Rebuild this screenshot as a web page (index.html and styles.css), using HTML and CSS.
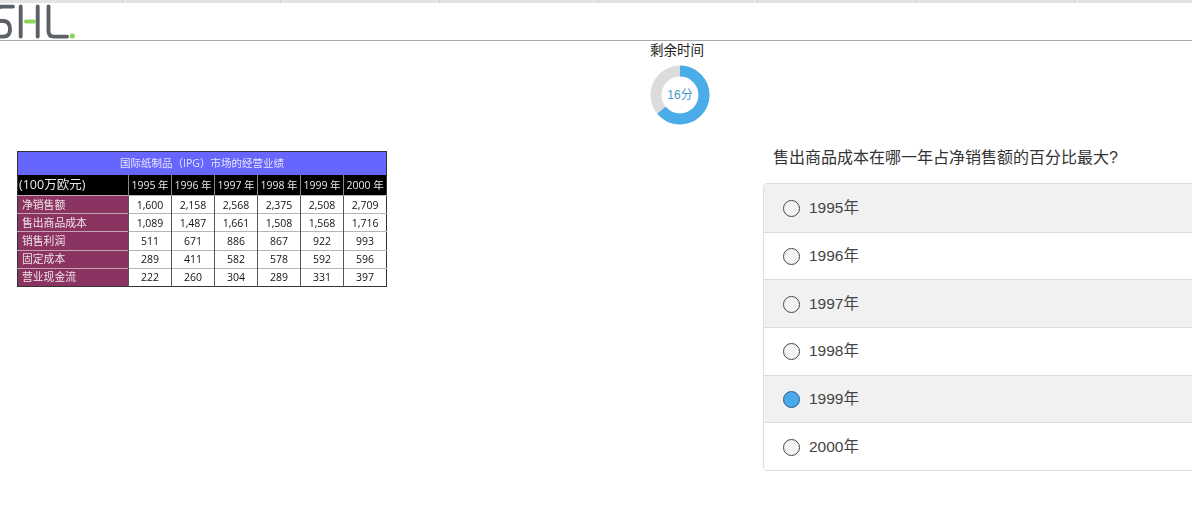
FILE: index.html
```html
<!DOCTYPE html>
<html lang="zh">
<head>
<meta charset="utf-8">
<title>SHL</title>
<link rel="stylesheet" href="styles.css">
</head>
<body>
<div class="page">
  <div class="topbar"><i></i><i></i><i></i><i></i><i></i><i></i><i></i><i></i></div>
  <header class="header">
    <svg class="logo" width="90" height="37" viewBox="0 0 90 37" aria-label="SHL">
      <path class="ink" d="M13 3.600H2.500C-3 3.600-5 7-5 11c0 4 2.500 7 7 7H3.500C8 18 10 21 10 26.500 10 31 8 33.600 3.500 33.600H-6"/>
      <path class="ink" d="M20.700 3.500V33.600M37.700 3.500V33.600M48.500 3.500V28C48.500 31.500 50.500 33.600 54 33.600H67"/>
      <path class="lime" d="M26 18.500H34"/>
      <circle class="dot" cx="72.300" cy="33" r="2.600"/>
    </svg>
  </header>
  <section class="timer">
    <div class="timer-label">剩余时间</div>
    <div class="donut">
      <svg width="60" height="60" viewBox="0 0 60 60">
        <circle class="track" cx="30" cy="30" r="24"/>
        <circle class="value" cx="30" cy="30" r="24" pathLength="100" stroke-dasharray="64 36" transform="rotate(-90 30 30)"/>
      </svg>
      <span class="donut-text">16分</span>
    </div>
  </section>
  <main class="content">
    <div class="left">
      <table class="data">
        <colgroup>
          <col class="c-label"><col class="c-year"><col class="c-year"><col class="c-year"><col class="c-year"><col class="c-year"><col class="c-year">
        </colgroup>
        <thead>
          <tr class="r-title"><th colspan="7">国际纸制品（IPG）市场的经营业绩</th></tr>
          <tr class="r-head"><th class="unit">(100万欧元)</th><th>1995 年</th><th>1996 年</th><th>1997 年</th><th>1998 年</th><th>1999 年</th><th>2000 年</th></tr>
        </thead>
        <tbody>
          <tr><th>净销售额</th><td>1,600</td><td>2,158</td><td>2,568</td><td>2,375</td><td>2,508</td><td>2,709</td></tr>
          <tr><th>售出商品成本</th><td>1,089</td><td>1,487</td><td>1,661</td><td>1,508</td><td>1,568</td><td>1,716</td></tr>
          <tr><th>销售利润</th><td>511</td><td>671</td><td>886</td><td>867</td><td>922</td><td>993</td></tr>
          <tr><th>固定成本</th><td>289</td><td>411</td><td>582</td><td>578</td><td>592</td><td>596</td></tr>
          <tr><th>营业现金流</th><td>222</td><td>260</td><td>304</td><td>289</td><td>331</td><td>397</td></tr>
        </tbody>
      </table>
    </div>
    <div class="right">
      <p class="question">售出商品成本在哪一年占净销售额的百分比最大?</p>
      <ul class="options">
        <li class="option odd"><span class="radio"></span><span class="opt-text">1995年</span></li>
        <li class="option"><span class="radio"></span><span class="opt-text">1996年</span></li>
        <li class="option odd"><span class="radio"></span><span class="opt-text">1997年</span></li>
        <li class="option"><span class="radio"></span><span class="opt-text">1998年</span></li>
        <li class="option odd"><span class="radio on"></span><span class="opt-text">1999年</span></li>
        <li class="option"><span class="radio"></span><span class="opt-text">2000年</span></li>
      </ul>
    </div>
  </main>
</div>
</body>
</html>
```
FILE: styles.css
```css
* { box-sizing: border-box; }
html, body { margin: 0; height: 100%; background: #fff; overflow: hidden; }
body { font-family: "Liberation Sans", "Noto Sans CJK SC", sans-serif; color: #333; }
.page { width: 1360px; }

.topbar { display: flex; height: 3px; background: #e4e4e4; }
.topbar i { width: 158.800px; border-right: 1px solid #d2d2d2; }
.topbar i:first-child { width: 122.500px; }

.header { height: 38px; border-bottom: 1px solid #a8a8a8; }
.logo { display: block; }
.logo path { fill: none; stroke-width: 3.900; stroke-linecap: round; stroke-linejoin: round; }
.ink { stroke: #5b6167; }
.lime { stroke: #8cd65a; }
.dot { fill: #8cd65a; }

.timer { display: flex; flex-direction: column; align-items: center; padding-top: 1px; }
.timer-label { font-size: 13.500px; line-height: 18px; color: #222; margin-left: -6px; }
.donut { position: relative; width: 60px; height: 60px; margin-top: 5px; }
.donut svg { display: block; }
.track, .value { fill: none; stroke-width: 11; }
.track { stroke: #dcdcdc; }
.value { stroke: #4aade9; }
.donut-text { position: absolute; inset: 0; display: flex; align-items: center; justify-content: center; font-size: 12px; color: #4a98cc; margin-top: -3px; }

.content { display: flex; }
.left { width: 763px; padding: 26px 0 0 17px; }
.data { border-collapse: collapse; table-layout: fixed; width: 369px; height: 135px; font-family: "Open Sans", "Noto Sans CJK SC", sans-serif; font-size: 10.500px; border: 1px solid #333; filter: blur(0.300px); }
.c-label { width: 111px; }
.c-year { width: 43px; }
.data th, .data td { padding: 0; text-align: center; font-weight: normal; white-space: nowrap; line-height: 12px; }
.r-title th { height: 23px; background: #6666ff; color: #e6e6ff; font-size: 10.500px; }
.r-head th { height: 21px; background: #000; color: #e8e8e8; border-left: 1px solid #888; }
.r-head .unit { border-left: 0; text-align: left; font-size: 12.500px; padding-left: 1px; }
.data tbody th { height: 18.200px; background: #8c3461; color: #efe3ea; text-align: left; padding-left: 4px; font-size: 10.800px; border-top: 1px solid #c3a3b3; }
.data tbody td { color: #111; border-left: 1px solid #555; border-top: 1px solid #b5b5b5; }

.right { width: 597px; padding-top: 22px; }
.question { margin: 0 0 14px 10px; font-size: 16px; line-height: 22px; color: #333; }
.options { list-style: none; margin: 0; padding: 0; border: 1px solid #ddd; border-radius: 4px; overflow: hidden; }
.option { display: flex; align-items: center; height: 47.700px; padding-left: 19px; font-size: 15.500px; color: #444; border-top: 1px solid #ddd; background: #fff; }
.option:first-child { border-top: 0; height: 47.500px; }
.option.odd { background: #f1f1f1; }
.radio { width: 17px; height: 17px; border-radius: 50%; border: 1px solid #444; background: #f4f4f4; margin: 1px 9px 0 0; flex: none; }
.radio.on { background: #4aa8ec; border-color: #2f5f85; }
.opt-text { margin-top: -4px; }
```
